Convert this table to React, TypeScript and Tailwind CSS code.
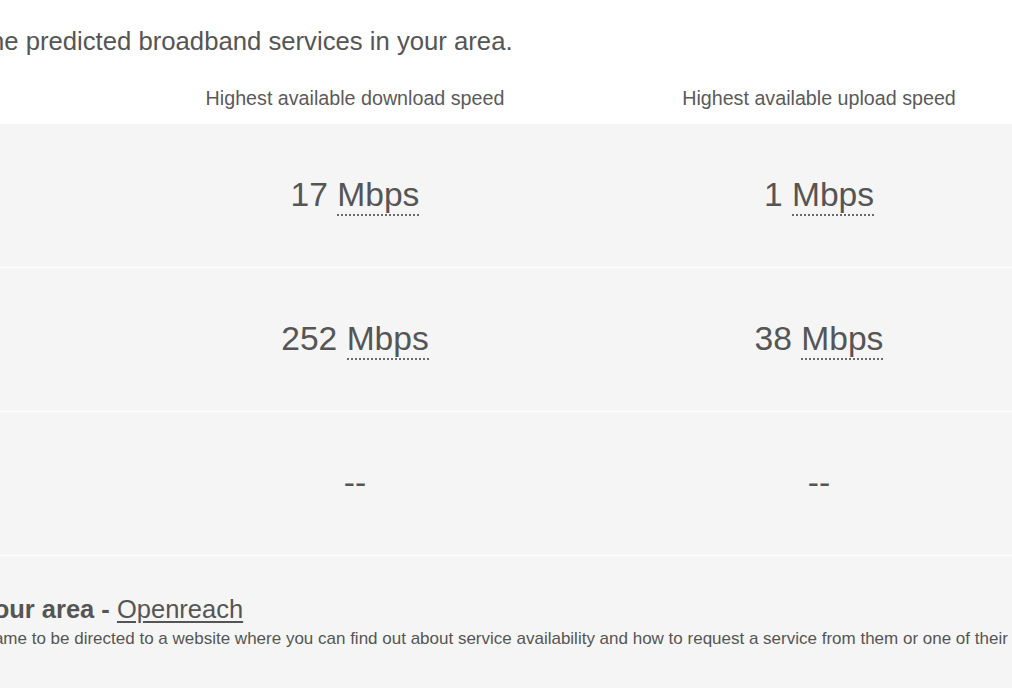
const rows = [
  { key: "standard", down: "17", up: "1" },
  { key: "superfast", down: "252", up: "38" },
  { key: "ultrafast", down: null, up: null },
];

function Speed({ value }: { value: string | null }) {
  if (!value) {
    return <span>--</span>;
  }

  return (
    <span>
      {value}{" "}
      <abbr
        title="Megabits per second"
        className="no-underline border-b-2 border-dotted border-[#6a6a6a] pb-px"
      >
        Mbps
      </abbr>
    </span>
  );
}

export default function App() {
  return (
    <div className="w-[1012px] h-[700px] overflow-hidden bg-white font-['Liberation_Sans',Arial,sans-serif] text-[#555]">
      <div className="-ml-[200px] w-[1251px]">
        {/* intro line */}
        <p className="mt-[26px] pl-[60px] text-[25.7px] leading-[30px]">
          These are the predicted broadband services in your area.
        </p>

        {/* column headings */}
        <div className="mt-[29.5px] grid grid-cols-[323px_464px_464px] text-[19.7px] leading-[24px] text-[#5a5a5a]">
          <div />
          <div className="text-center">Highest available download speed</div>
          <div className="text-center">Highest available upload speed</div>
        </div>

        {/* speed table */}
        <div className="mt-[14.5px] bg-[#f5f5f5]">
          {rows.map((row) => (
            <div
              key={row.key}
              className="grid grid-cols-[323px_464px_464px] h-[144px] border-b border-white items-center text-[33.6px] text-[#555]"
            >
              <div />
              <div className="text-center">
                <Speed value={row.down} />
              </div>
              <div className="text-center">
                <Speed value={row.up} />
              </div>
            </div>
          ))}

          {/* provider */}
          <div className="pt-[37.5px] pb-[38.8px]">
            <h3 className="pl-[25px] text-[25.5px] leading-[30px] font-bold">
              Providers in your area -{" "}
              <a href="#" className="font-normal underline underline-offset-[3px]">
                Openreach
              </a>
            </h3>
            <p className="mt-[5.7px] pl-[13px] text-[17px] leading-[20px] whitespace-nowrap">
              Click on the provider's name to be directed to a website where you can find out about
              service availability and how to request a service from them or one of their providers.
            </p>
          </div>
        </div>
      </div>
    </div>
  );
}
